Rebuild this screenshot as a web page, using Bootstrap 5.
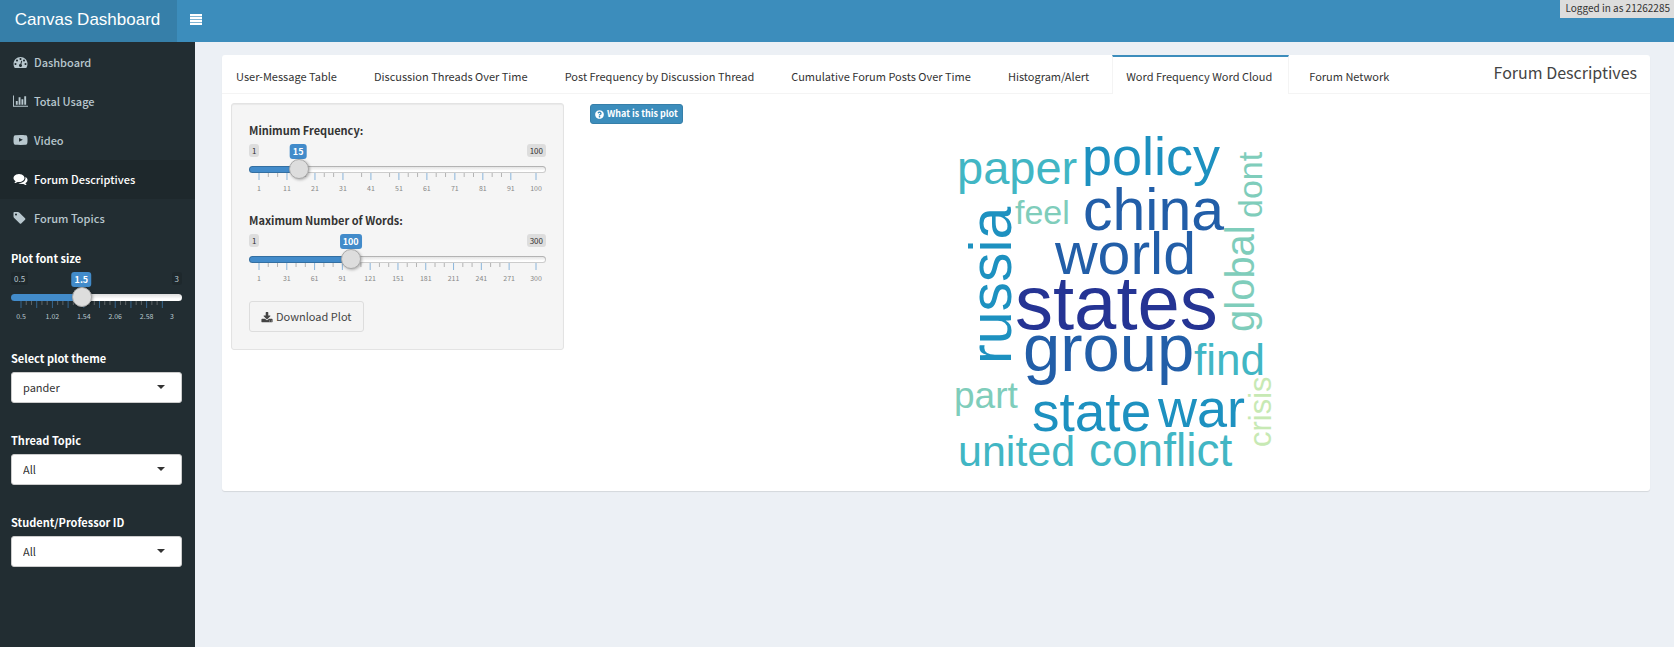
<!DOCTYPE html>
<html lang="en">
<head>
<meta charset="utf-8">
<meta name="viewport" content="width=device-width, initial-scale=1">
<title>Canvas Dashboard</title>
<link href="https://cdn.jsdelivr.net/npm/bootstrap@5.3.0/dist/css/bootstrap.min.css" rel="stylesheet">
<style>
  body { background: #ecf0f5; color: #333; font-family: "Noto Sans CJK SC", "Source Sans Pro", sans-serif; font-size: 11px; line-height: 18px; }
  .topbar { background: #3c8dbc; height: 42px; }
  .brand { background: #367fa9; color: #fff; width: 177px; font: 17px/40px "Liberation Sans", Arial, sans-serif; padding-right: 2px; }
  .brand:hover { color: #fff; }
  .toggle { padding: 0 0 4px 13px; color: #fff; }
  .login-note { background: #ddd; color: #333; font-size: 10px; line-height: 15px; padding: 0 4px 3px 5px; z-index: 5; }
  .side { width: 195px; background: #222d32; color: #fff; }
  .side-menu { padding-top: 1px; }
  .side-menu .nav-link { height: 39px; padding: 0 13px 2px; color: #b8c7ce; font-weight: 500; gap: 6px; }
  .side-menu .nav-link.active { background: #1e282c; color: #fff; }
  .side-menu svg { width: 15px; height: 14px; fill: currentColor; }
  .side-form { padding: 11px 13px 0 11px; }
  .field-title { font-size: 11px; line-height: 18px; font-weight: 700; margin: 0 0 5px; display: block; }
  .side .form-select { height: 31px; font-size: 11px; line-height: 18px; padding: 4px 30px 6px 11px; border-color: #ccc; border-radius: 3px; color: #333;
    background-image: url("data:image/svg+xml,%3Csvg xmlns='http://www.w3.org/2000/svg' viewBox='0 0 8 4'%3E%3Cpath d='M0 0h8L4 4z' fill='%23333'/%3E%3C/svg%3E"); background-size: 8px 4px; background-position: right 16px top 12px; }
  .side-field { margin-bottom: 28px; }
  .main { padding: 13px 24px 0 27px; }
  .panel { background: #fff; border-radius: 3px; box-shadow: 0 1px 1px rgba(0,0,0,.1); }
  .panel-tabs { border-bottom: 1px solid #f4f4f4; }
  .panel-tabs .nav-item { margin-right: 6px; margin-bottom: -1px; }
  .panel-tabs .nav-link { height: 39px; border: solid transparent; border-width: 2px 1px 0; padding: 10px 16px 0 13px; color: #333; white-space: nowrap; }
  .panel-tabs .nav-link.active { background: #fff; border-color: #3c8dbc #f4f4f4 transparent; color: #333; }
  .panel-title { font-size: 16px; line-height: 34px; color: #444; margin: 0 13px 0 0; font-weight: 400; }
  .panel-body { padding: 9px 9px 11px; }
  .panel-body > .row { --bs-gutter-x: 26px; }
  .well { background: #f5f5f5; border: 1px solid #e3e3e3; border-radius: 3px; padding: 17px; box-shadow: inset 0 1px 1px rgba(0,0,0,.05); }
  .slider { margin-bottom: 16px; }
  .slider-top { height: 15px; position: relative; }
  .chip { background: #ddd; color: #333; font-size: 8px; line-height: 13px; height: 13px; padding: 0 3px; border-radius: 3px; }
  .bubble { position: absolute; top: 0; transform: translateX(-50%); background: #428bca; color: #fff; font-weight: 700; font-size: 9px; line-height: 15px; padding: 0 3px; border-radius: 3px; }
  .slider input { display: block; width: 100%; height: 20px; margin: 0; background: none; appearance: none; -webkit-appearance: none; position: relative; z-index: 1; }
  .slider input::-webkit-slider-runnable-track { height: 7px; border-radius: 4px; border: 1px solid #ccc; box-shadow: none;
    background: linear-gradient(#428bca, #428bca) 0 0 / var(--fill) 100% no-repeat border-box, linear-gradient(#ddd, #fff 70%) border-box; }
  .slider input::-webkit-slider-thumb { -webkit-appearance: none; width: 20px; height: 20px; margin-top: -8px; border-radius: 50%; background: #ddd; border: 1px solid #aaa; box-shadow: 1px 1px 3px rgba(0,0,0,.3); }
  .well .slider input::-webkit-slider-runnable-track { border-color: rgba(0,0,0,.2); }
  .scale { display: block; padding: 0 10px; height: 22px; width: 100%; margin-top: -6px; overflow: visible; }
  .scale .major { stroke: #428bca; stroke-opacity: .6; }
  .scale .minor { stroke: #999; stroke-opacity: .7; }
  .scale text { font-size: 7px; fill: #888; text-anchor: middle; }
  .side .slider { margin-bottom: 26px; }
  .side .chip { background: #1e282c; color: #b8c7ce; }
  .side .scale text { fill: #b8c7ce; }
  .side .scale .minor { stroke-opacity: .5; }
  .side .slider input::-webkit-slider-runnable-track { border-color: transparent; }
  .btn-save { background: #f4f4f4; border: 1px solid #ddd; color: #444; font-size: 11px; line-height: 19px; padding: 5px 11px; border-radius: 3px; }
  .btn-save svg { margin-right: 3px; }
  .btn-info-small { background: #3c8dbc; border: 1px solid #367fa9; color: #fff; font-size: 9px; font-weight: 700; line-height: 16px; padding: 1px 4px; border-radius: 3px; margin-top: 1px; gap: 3px; }
  .btn svg { fill: currentColor; }
  .cloud { width: 340px; height: 350px; margin-top: 6px; font-family: "Liberation Sans", Arial, sans-serif; overflow: visible; max-width: 100%; }
</style>
</head>
<body class="d-flex flex-column min-vh-100">
<header class="topbar d-flex position-relative">
  <a href="#" class="brand text-center text-decoration-none">Canvas Dashboard</a>
  <button type="button" class="btn toggle border-0 rounded-0 d-flex align-items-center" aria-label="Toggle navigation">
    <svg width="12" height="11" viewBox="0 0 12 11"><path d="M0 0h12v2H0zM0 3h12v2H0zM0 6h12v2H0zM0 9h12v2H0z"/><path d="M0 0h12v11H0z" opacity=".35"/></svg>
  </button>
  <div class="login-note position-absolute top-0 end-0">Logged in as 21262285</div>
</header>
<div class="d-flex flex-grow-1">
  <aside class="side flex-shrink-0">
    <nav class="side-menu nav flex-column">
      <a class="nav-link d-flex align-items-center" href="#"><svg viewBox="0 0 1792 1792"><path d="M384 1152q0-53-37.500-90.500t-90.500-37.500-90.500 37.500-37.500 90.500 37.500 90.500 90.500 37.500 90.500-37.500 37.500-90.500zm192-448q0-53-37.500-90.500t-90.500-37.500-90.500 37.500-37.500 90.500 37.500 90.500 90.500 37.500 90.500-37.500 37.500-90.500zm428 481l101-382q6-26-7.500-48.500t-38.500-29.500-48 6.500-30 39.500l-101 382q-60 5-107 43.500t-63 98.500q-20 77 20 146t117 89 146-20 89-117q16-60-6-117t-72-91zm660-33q0-53-37.500-90.500t-90.500-37.500-90.500 37.500-37.500 90.500 37.500 90.500 90.500 37.500 90.500-37.500 37.500-90.500zm-640-640q0-53-37.500-90.500t-90.500-37.500-90.500 37.500-37.500 90.500 37.500 90.500 90.500 37.500 90.500-37.500 37.500-90.500zm448 192q0-53-37.500-90.500t-90.500-37.500-90.500 37.500-37.500 90.500 37.500 90.500 90.500 37.500 90.500-37.500 37.500-90.500zm320 448q0 261-141 483-19 29-54 29h-1402q-35 0-54-29-141-221-141-483 0-182 71-348t191-286 286-191 348-71 348 71 286 191 191 286 71 348z"/></svg>Dashboard</a>
      <a class="nav-link d-flex align-items-center" href="#"><svg viewBox="0 0 2048 1792"><path d="M640 896v512h-256v-512h256zm384-512v1024h-256v-1024h256zm1024 1152v128h-2048v-1536h128v1408h1920zm-640-896v768h-256v-768h256zm384-384v1152h-256v-1152h256z"/></svg>Total Usage</a>
      <a class="nav-link d-flex align-items-center" href="#"><svg viewBox="0 0 1792 1792"><path d="M711 1128l484-250-484-253v503zm185-862q168 0 324.500 4.500t229.500 9.500l73 4q1 0 17 1.500t23 3 23.500 4.500 28.500 8 28 13 31 19.500 29 26.500q6 6 15.500 18.500t29 58.500 26.500 101q8 64 12.500 136.500t5.500 113.500v176q1 145-18 290-7 55-25 99.500t-32 61.500l-14 17q-14 15-29 26.500t-31 19-28 12.500-28.500 8-24 4.500-23 3-16.500 1.500q-251 19-627 19-207-2-359.500-6.500t-200.500-7.500l-49-4-36-4q-36-5-54.500-10t-51-21-56.500-41q-6-6-15.500-18.500t-29-58.500-26.500-101q-8-64-12.500-136.500t-5.500-113.500v-176q-1-145 18-290 7-55 25-99.500t32-61.500l14-17q14-15 29-26.500t31-19.500 28-13 28.500-8 23.500-4.500 23-3 17-1.500q251-18 627-18z"/></svg>Video</a>
      <a class="nav-link active d-flex align-items-center" href="#" aria-current="page"><svg viewBox="0 0 1792 1792"><path d="M1408 768q0 139-94 257t-256.500 186.500-353.500 68.500q-86 0-176-16-124 88-278 128-36 9-86 16h-3q-11 0-20.500-8t-11.500-21q-1-3-1-6.500t.5-6.500 2-6l2.500-5 3.500-5.500 4-5 4.500-5 4-4.500q5-6 23-25t26-29.500 22.500-29 25-38.500 20.500-44q-124-72-195-177t-71-224q0-139 94-257t256.500-186.500 353.500-68.500 353.500 68.500 256.500 186.500 94 257zm384 256q0 120-71 224.500t-195 176.500q10 24 20.500 44t25 38.500 22.500 29 26 29.500 23 25q1 1 4 4.500t4.500 5 4 5 3.500 5.500l2.500 5 2 6 .5 6.500-1 6.500q-3 14-13 22t-22 7q-50-7-86-16-154-40-278-128-90 16-176 16-271 0-472-132 58 4 88 4 161 0 309-45t264-129q125-92 192-212t67-254q0-77-23-152 129 71 204 178t75 230z"/></svg>Forum Descriptives</a>
      <a class="nav-link d-flex align-items-center" href="#"><svg viewBox="0 0 1792 1792"><path d="M448 448q0-53-37.500-90.500t-90.500-37.500-90.500 37.500-37.500 90.500 37.500 90.500 90.500 37.500 90.500-37.500 37.500-90.500zm1067 576q0 53-37 90l-491 492q-39 37-91 37-53 0-90-37l-715-716q-38-37-64.500-101t-26.500-117v-416q0-52 38-90t90-38h416q53 0 117 26.500t102 64.500l715 714q37 39 37 91z"/></svg>Forum Topics</a>
    </nav>
    <form class="side-form">
      <label class="field-title" for="fontSize">Plot font size</label>
      <div class="slider" data-min="0.5" data-max="3" data-step="0.26" data-label-every="2" data-minors="2,2,2,2,2,2,2,2,2,0">
        <input type="range" id="fontSize" min="0.5" max="3" step="0.1" value="1.5">
      </div>
      <div class="side-field">
        <label class="field-title" for="theme">Select plot theme</label>
        <select class="form-select" id="theme"><option>pander</option></select>
      </div>
      <div class="side-field">
        <label class="field-title" for="topic">Thread Topic</label>
        <select class="form-select" id="topic"><option>All</option></select>
      </div>
      <div class="side-field">
        <label class="field-title" for="person">Student/Professor ID</label>
        <select class="form-select" id="person"><option>All</option></select>
      </div>
    </form>
  </aside>
  <main class="main flex-grow-1">
    <section class="panel">
      <div class="panel-tabs d-flex justify-content-between">
        <ul class="nav">
          <li class="nav-item"><a class="nav-link" href="#">User-Message Table</a></li>
          <li class="nav-item"><a class="nav-link" href="#">Discussion Threads Over Time</a></li>
          <li class="nav-item"><a class="nav-link" href="#">Post Frequency by Discussion Thread</a></li>
          <li class="nav-item"><a class="nav-link" href="#">Cumulative Forum Posts Over Time</a></li>
          <li class="nav-item"><a class="nav-link" href="#">Histogram/Alert</a></li>
          <li class="nav-item"><a class="nav-link active" href="#" aria-current="true">Word Frequency Word Cloud</a></li>
          <li class="nav-item"><a class="nav-link" href="#">Forum Network</a></li>
        </ul>
        <h1 class="panel-title">Forum Descriptives</h1>
      </div>
      <div class="panel-body">
        <div class="row">
          <div class="col-3">
            <form class="well">
              <label class="field-title" for="minFreq">Minimum Frequency:</label>
              <div class="slider" data-min="1" data-max="100" data-step="10" data-label-every="1" data-minors="2,2,2,1,1,2,2,2,2,0">
                <input type="range" id="minFreq" min="1" max="100" value="15">
              </div>
              <label class="field-title" for="maxWords">Maximum Number of Words:</label>
              <div class="slider" data-min="1" data-max="300" data-step="30" data-label-every="1" data-minors="2,2,2,2,2,2,2,2,2,0">
                <input type="range" id="maxWords" min="1" max="300" value="100">
              </div>
              <button type="button" class="btn btn-save"><svg width="12" height="12" viewBox="0 0 1792 1792"><path d="M1344 1344q0-26-19-45t-45-19-45 19-19 45 19 45 45 19 45-19 19-45zm256 0q0-26-19-45t-45-19-45 19-19 45 19 45 45 19 45-19 19-45zm128-224v320q0 40-28 68t-68 28h-1472q-40 0-68-28t-28-68v-320q0-40 28-68t68-28h465l135 136q58 56 136 56t136-56l136-136h464q40 0 68 28t28 68zm-325-569q17 41-14 70l-448 448q-18 19-45 19t-45-19l-448-448q-31-29-14-70 17-39 59-39h256v-448q0-26 19-45t45-19h256q26 0 45 19t19 45v448h256q42 0 59 39z"/></svg>Download Plot</button>
            </form>
          </div>
          <div class="col-9 d-flex flex-column">
            <button type="button" class="btn btn-info-small align-self-start d-flex align-items-center"><svg width="9" height="9" viewBox="96 96 1600 1600"><path d="M1024 1376v-192q0-14-9-23t-23-9h-192q-14 0-23 9t-9 23v192q0 14 9 23t23 9h192q14 0 23-9t9-23zm256-672q0-88-55.500-163t-138.500-116-170-41q-243 0-371 213-15 24 8 42l132 100q7 6 19 6 16 0 25-12 53-68 86-92 34-24 86-24 48 0 85.500 26t37.500 59q0 38-20 61t-68 45q-63 28-115.500 86.500t-52.500 125.500v36q0 14 9 23t23 9h192q14 0 23-9t9-23q0-19 21.500-49.500t54.500-49.500q32-18 49-28.500t46-35 44.500-48 28-60.500 12.500-81zm384 192q0 209-103 385.500t-279.500 279.500-385.500 103-385.500-103-279.500-279.500-103-385.500 103-385.500 279.500-279.500 385.500-103 385.500 103 279.500 279.500 103 385.500z"/></svg>What is this plot</button>
            <svg class="cloud align-self-center" viewBox="0 0 340 350" role="img" aria-label="Word cloud">
              <g fill="#253494"><text x="69" y="199" font-size="76">states</text></g>
              <g fill="#225ea8">
                <text x="137" y="100" font-size="59">china</text>
                <text x="109" y="144" font-size="59">world</text>
                <text x="77" y="241" font-size="67">group</text>
              </g>
              <g fill="#1d91c0">
                <text x="136" y="45" font-size="54">policy</text>
                <text x="86" y="301" font-size="55">state</text>
                <text x="212" y="297" font-size="54">war</text>
                <text transform="translate(65 234) rotate(-90)" font-size="59">russia</text>
              </g>
              <g fill="#41b6c4">
                <text x="11" y="54" font-size="47">paper</text>
                <text x="248" y="245" font-size="44">find</text>
                <text x="12" y="336" font-size="43">united</text>
                <text x="143" y="336" font-size="46">conflict</text>
              </g>
              <g fill="#7fcdbb">
                <text x="69" y="94" font-size="34">feel</text>
                <text x="8" y="278" font-size="37">part</text>
                <text transform="translate(316 88) rotate(-90)" font-size="34">dont</text>
                <text transform="translate(308 202) rotate(-90)" font-size="40">global</text>
              </g>
              <g fill="#c7e9b4"><text transform="translate(325 317) rotate(-90)" font-size="31">crisis</text></g>
            </svg>
          </div>
        </div>
      </div>
    </section>
  </main>
</div>
<script src="https://cdn.jsdelivr.net/npm/bootstrap@5.3.0/dist/js/bootstrap.bundle.min.js"></script>
<script>
  // Adds the end labels, the value bubble and the tick scale to each range input.
  document.querySelectorAll('.slider').forEach(function (el) {
    var d = el.dataset, min = +d.min, max = +d.max, step = +d.step, every = +d.labelEvery;
    var minors = d.minors.split(',').map(Number);
    var input = el.querySelector('input');
    var pct = function (v) { return (v - min) / (max - min) * 100; };
    var top = document.createElement('div');
    top.className = 'slider-top d-flex justify-content-between align-items-start';
    top.innerHTML = '<span class="chip">' + min + '</span><span class="bubble"></span><span class="chip">' + max + '</span>';
    el.insertBefore(top, input);
    function update() {
      var p = pct(+input.value) / 100;
      var pos = 'calc(10px + (100% - 20px) * ' + p + ')';
      top.querySelector('.bubble').textContent = input.value;
      top.querySelector('.bubble').style.left = pos;
      input.style.setProperty('--fill', pos);
    }
    input.addEventListener('input', update);
    update();
    var parts = '';
    function line(v, cls, len) {
      parts += '<line class="' + cls + '" x1="' + pct(v) + '%" x2="' + pct(v) + '%" y1="0" y2="' + len + '"/>';
    }
    function label(v) { parts += '<text x="' + pct(v) + '%" y="18">' + +v.toFixed(2) + '</text>'; }
    for (var i = 0; i < minors.length; i++) {
      var v = min + i * step;
      line(v, 'major', 7);
      if (i % every === 0) label(v);
      for (var m = 3 - minors[i]; m < 3; m++) line(v + step * m / 3, 'minor', 4);
    }
    if (every === 1) line(max, 'major', 7);
    label(max);
    input.insertAdjacentHTML('afterend', '<svg class="scale" aria-hidden="true">' + parts + '</svg>');
  });
</script>
</body>
</html>
